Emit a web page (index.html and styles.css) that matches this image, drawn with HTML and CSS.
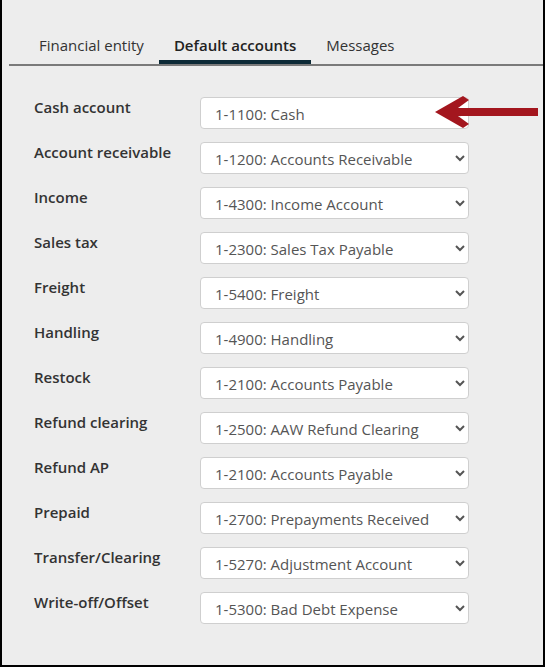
FILE: index.html
```html
<!DOCTYPE html>
<html>
<head>
<meta charset="utf-8">
<link rel="stylesheet" href="styles.css">
</head>
<body>
<div class="page">
  <div class="tabbar">
    <div class="tabs">
      <div class="tab">Financial entity</div>
      <div class="tab active">Default accounts</div>
      <div class="tab">Messages</div>
    </div>
  </div>
  <div class="form">
    <div class="row"><label class="lbl">Cash account</label><select class="sel"><option>1-1100: Cash</option></select></div>
    <div class="row"><label class="lbl">Account receivable</label><select class="sel"><option>1-1200: Accounts Receivable</option></select></div>
    <div class="row"><label class="lbl">Income</label><select class="sel"><option>1-4300: Income Account</option></select></div>
    <div class="row"><label class="lbl">Sales tax</label><select class="sel"><option>1-2300: Sales Tax Payable</option></select></div>
    <div class="row"><label class="lbl">Freight</label><select class="sel"><option>1-5400: Freight</option></select></div>
    <div class="row"><label class="lbl">Handling</label><select class="sel"><option>1-4900: Handling</option></select></div>
    <div class="row"><label class="lbl">Restock</label><select class="sel"><option>1-2100: Accounts Payable</option></select></div>
    <div class="row"><label class="lbl">Refund clearing</label><select class="sel"><option>1-2500: AAW Refund Clearing</option></select></div>
    <div class="row"><label class="lbl">Refund AP</label><select class="sel"><option>1-2100: Accounts Payable</option></select></div>
    <div class="row"><label class="lbl">Prepaid</label><select class="sel"><option>1-2700: Prepayments Received</option></select></div>
    <div class="row"><label class="lbl">Transfer/Clearing</label><select class="sel"><option>1-5270: Adjustment Account</option></select></div>
    <div class="row"><label class="lbl">Write-off/Offset</label><select class="sel"><option>1-5300: Bad Debt Expense</option></select></div>
  </div>
  <svg class="pointer" width="106" height="32" viewBox="0 0 106 32">
    <polygon points="1,16 29,0 35,4 24,12 104,12 104,20 24,20 35,28 29,32" fill="#a3161e"/>
  </svg>
</div>
</body>
</html>
```
FILE: styles.css
```css
html, body {
  margin: 0;
  padding: 0;
}
body {
  font-family: "Open Sans", "Noto Sans", sans-serif;
  background: #ededed;
}
.page {
  position: relative;
  width: 545px;
  height: 667px;
  box-sizing: border-box;
  border-left: 2px solid #000;
  border-right: 2px solid #000;
  border-bottom: 2px solid #000;
  background: #ededed;
  overflow: hidden;
}
.tabbar {
  margin-left: 7px;
  padding-top: 35px;
  padding-left: 15px;
  border-bottom: 2px solid #7a7a7a;
}
.tabs {
  display: flex;
}
.tab {
  font-size: 15px;
  line-height: 20px;
  color: #333;
  padding: 0 15px 5px;
  border-bottom: 4px solid transparent;
}
.tab.active {
  font-weight: 600;
  color: #222;
  border-bottom-color: #0c2a36;
}
.form {
  padding: 31px 0 0 32px;
  display: flex;
  flex-direction: column;
  gap: 13px;
}
.row {
  display: flex;
  align-items: flex-start;
}
.lbl {
  width: 166px;
  font-size: 15px;
  font-weight: 600;
  line-height: 20px;
  color: #333;
}
.sel {
  width: 269px;
  height: 32px;
  box-sizing: border-box;
  border: 1px solid #cfcfcf;
  border-radius: 4px;
  background-color: #fff;
  font-family: "Open Sans", "Noto Sans", sans-serif;
  font-size: 15px;
  color: #555;
  padding: 2px 10px 0 10px;
  margin: 0;
}
.pointer {
  position: absolute;
  left: 432px;
  top: 96px;
}
```
